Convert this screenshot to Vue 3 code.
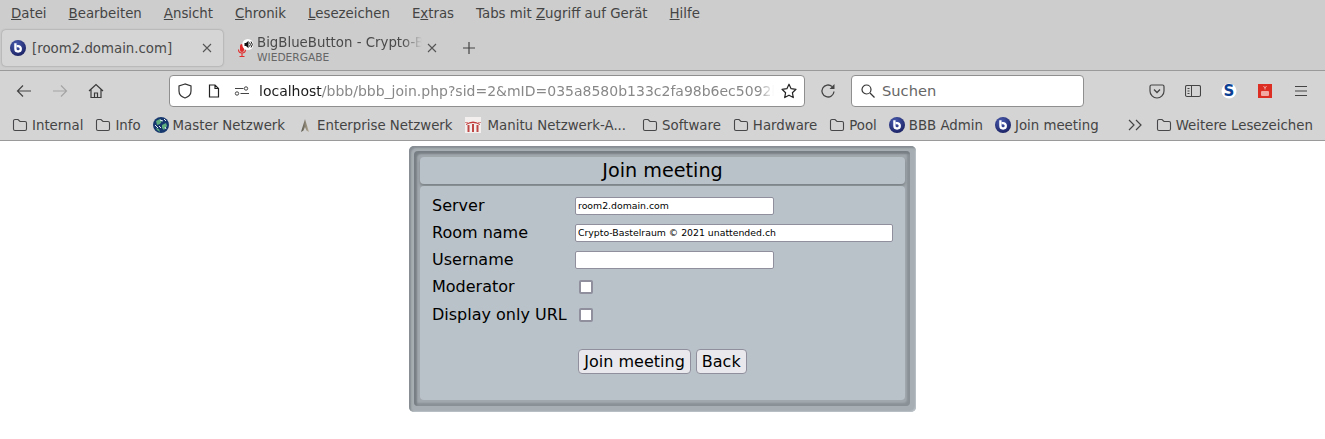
<script setup>
const menus = [
  { pre: '', u: 'D', post: 'atei' },
  { pre: '', u: 'B', post: 'earbeiten' },
  { pre: '', u: 'A', post: 'nsicht' },
  { pre: '', u: 'C', post: 'hronik' },
  { pre: '', u: 'L', post: 'esezeichen' },
  { pre: 'E', u: 'x', post: 'tras' },
  { pre: 'Tabs mit ', u: 'Z', post: 'ugriff auf Gerät' },
  { pre: '', u: 'H', post: 'ilfe' }
]
const bookmarks = [
  { t: 'Internal', i: 'folder' },
  { t: 'Info', i: 'folder' },
  { t: 'Master Netzwerk', i: 'globe' },
  { t: 'Enterprise Netzwerk', i: 'ship' },
  { t: 'Manitu Netzwerk-A...', i: 'manitu' },
  { t: 'Software', i: 'folder' },
  { t: 'Hardware', i: 'folder' },
  { t: 'Pool', i: 'folder' },
  { t: 'BBB Admin', i: 'bbb' },
  { t: 'Join meeting', i: 'bbb' }
]
</script>

<template>
  <div class="browser">
    <svg width="0" height="0" class="defs">
      <defs>
        <radialGradient id="bbbg" cx="0.4" cy="0.3" r="0.8">
          <stop offset="0" stop-color="#4a5cb0"/>
          <stop offset="1" stop-color="#161c5c"/>
        </radialGradient>
        <linearGradient id="shipg" x1="0" x2="1" y1="0" y2="0">
          <stop offset="0" stop-color="#57534a"/>
          <stop offset="1" stop-color="#b8ad98"/>
        </linearGradient>
        <symbol id="folder" viewBox="0 0 16 16">
          <path d="M1.5 4a1.5 1.5 0 0 1 1.5-1.5h3l2 2h5a1.500 1.500 0 0 1 1.500 1.500v6a1.500 1.500 0 0 1-1.500 1.500H3A1.500 1.500 0 0 1 1.500 12z" fill="none" stroke="#474749" stroke-width="1.100"/>
        </symbol>
        <symbol id="bbb" viewBox="0 0 16 16">
          <circle cx="8" cy="8" r="8" fill="url(#bbbg)"/>
          <path d="M5.400 3.200V8.800a2.700 2.700 0 1 0 2.700-2.700H6.800" fill="none" stroke="#fff" stroke-width="2.300"/>
        </symbol>
        <symbol id="globe" viewBox="0 0 16 16">
          <circle cx="8" cy="8" r="8" fill="#16386f"/>
          <path d="M3 4l4-2 2 2-2 3-3 1zM9 8l4-2 1 3-3 4-2-2zM3 11l3 1 1 3-3-2z" fill="#5fae7d"/>
          <path d="M7 3l3 1M2 8l3 3M11 2l2 2M6 9l2 2M12 10l1 2" stroke="#e8f0f6" fill="none"/>
        </symbol>
        <symbol id="ship" viewBox="0 0 16 16">
          <path d="M8 2 L12 15 L9.500 13.500 L8 10 L6.500 13.500 L4 15 Z" fill="url(#shipg)"/>
        </symbol>
        <symbol id="manitu" viewBox="0 0 16 16">
          <rect width="16" height="16" fill="#f3efef"/>
          <path d="M1 7 Q8 2 15 7 L15 8 Q8 4 1 8 Z" fill="#c23a3a"/>
          <path d="M2.500 8h2v7h-2zM7 7h2v8H7zM11.500 8h2v7h-2z" fill="#c04646"/>
          <path d="M0 5h3v1H0zM13 5h3v1h-3z" fill="#d98a8a"/>
        </symbol>
      </defs>
    </svg>

    <div class="menubar">
      <span v-for="m in menus" :key="m.u" class="menu">{{ m.pre }}<u>{{ m.u }}</u>{{ m.post }}</span>
    </div>

    <div class="tabbar">
      <div class="tab active">
        <svg class="i16"><use href="#bbb"/></svg>
        <span class="tab-title">[room2.domain.com]</span>
        <svg class="close" viewBox="0 0 10 10"><path d="M1 1l8 8M9 1l-8 8" stroke="#555" stroke-width="1.100"/></svg>
      </div>
      <div class="tab second">
        <span class="mute">
          <svg viewBox="0 0 16 18" width="16" height="18">
            <path d="M2 7a2 2 0 0 1 4 0v4a2 2 0 0 1-4 0z" fill="#e22b2b"/>
            <path d="M0.500 10.500a3.500 3.500 0 0 0 7 0M4 14.500v2.500M1.500 17.500h5" fill="none" stroke="#e22b2b" stroke-width="1.100"/>
            <circle cx="9.800" cy="5.500" r="5.500" fill="#fff"/>
            <path d="M6.500 4h1.500l2.500-2.200v7.400L8 7H6.500z" fill="#111"/>
            <path d="M11.500 3.500a3 3 0 0 1 0 4M13 2.500a4.500 4.500 0 0 1 0 6" fill="none" stroke="#111"/>
          </svg>
        </span>
        <span class="tab-stack">
          <span class="tab-fade">BigBlueButton - Crypto-Bastelraum</span>
          <span class="tab-sub">WIEDERGABE</span>
        </span>
        <svg class="close" viewBox="0 0 10 10"><path d="M1 1l8 8M9 1l-8 8" stroke="#555" stroke-width="1.100"/></svg>
      </div>
      <svg class="plus" viewBox="0 0 12 12"><path d="M6 0v12M0 6h12" stroke="#444" stroke-width="1.200"/></svg>
    </div>

    <div class="toolbar">
      <div class="nav">
        <svg class="i16" viewBox="0 0 16 16"><path d="M15 8H1.500M7 2.500L1.500 8 7 13.500" fill="none" stroke="#444" stroke-width="1.200"/></svg>
        <svg class="i16" viewBox="0 0 16 16"><path d="M1 8h13.500M9 2.500L14.500 8 9 13.500" fill="none" stroke="#a4a4a4" stroke-width="1.200"/></svg>
        <svg class="i16" viewBox="0 0 16 16"><path d="M1 8L8 1.500 15 8M3 6.500V14.500H13V6.500M6.500 14.500V10h3v4.500" fill="none" stroke="#3a3a3a" stroke-width="1.200"/></svg>
      </div>
      <div class="urlbar">
        <svg class="i16" viewBox="0 0 16 16"><path d="M8 1L2 3v5c0 3.500 3 6 6 7 3-1 6-3.500 6-7V3z" fill="none" stroke="#333" stroke-width="1.200"/></svg>
        <svg class="i14 doc" viewBox="0 0 14 14"><path d="M2.500 1h5.500l3.500 3.500V13H2.500zM8 1v3.500h3.500" fill="none" stroke="#222" stroke-width="1.200"/></svg>
        <svg class="i16 perm" viewBox="0 0 16 16"><circle cx="3" cy="10.500" r="1.700" fill="none" stroke="#444"/><circle cx="12" cy="5.500" r="1.700" fill="none" stroke="#444"/><path d="M1 5.500h8.500M6.500 10.500H15" stroke="#444" stroke-width="1.100"/></svg>
        <span class="url"><b>localhost</b>/bbb/bbb_join.php?sid=2&amp;mID=035a8580b133c2fa98b6ec5092b1a7c4</span>
        <svg class="i16 star" viewBox="0 0 16 16"><path d="M8 1.200l2.100 4.500 4.900.6-3.600 3.400.9 4.900L8 12.200l-4.300 2.400.9-4.900L1 6.300l4.900-.6z" fill="none" stroke="#222" stroke-width="1.200" stroke-linejoin="round"/></svg>
      </div>
      <svg class="i16 reload" viewBox="0 0 16 16"><path d="M14 8.500a6 6 0 1 1-2-5" fill="none" stroke="#444" stroke-width="1.300"/><path d="M14.500 1v5h-5z" fill="#444"/></svg>
      <div class="search">
        <svg class="i14" viewBox="0 0 14 14"><circle cx="5.500" cy="5.500" r="4.500" fill="none" stroke="#333" stroke-width="1.200"/><path d="M9 9l4.500 4.500" stroke="#333" stroke-width="1.300"/></svg>
        <span>Suchen</span>
      </div>
      <div class="extras">
        <svg class="i16" viewBox="0 0 16 16"><path d="M2.500 2h11A1.500 1.500 0 0 1 15 3.500V8a7 7 0 0 1-14 0V3.500A1.500 1.500 0 0 1 2.500 2z" fill="none" stroke="#444" stroke-width="1.200"/><path d="M5 6.500l3 3 3-3" fill="none" stroke="#444" stroke-width="1.300"/></svg>
        <svg class="i16" viewBox="0 0 16 16"><rect x="0.500" y="2.500" width="15" height="11" rx="1.500" fill="none" stroke="#444" stroke-width="1.100"/><path d="M6.500 3v10M2.500 5.500h2M2.500 8h2M2.500 10.500h2" stroke="#444"/></svg>
        <svg class="i16" viewBox="0 0 16 16"><circle cx="8" cy="8" r="7.500" fill="#fff"/><text x="8" y="13" text-anchor="middle" class="s-glyph">S</text></svg>
        <svg class="i16" viewBox="0 0 16 16"><rect x="1" y="1" width="14" height="14" fill="#dc2e22"/><rect x="4" y="8" width="8" height="5" rx="1" fill="#f2a9a2"/><path d="M6.500 3l1.500 2 1.500-2M8 5v1.500" stroke="#f2a9a2" fill="none"/></svg>
        <svg class="i16" viewBox="0 0 16 16"><path d="M2 3.500h12M2 8h12M2 12.500h12" stroke="#444" stroke-width="1.200"/></svg>
      </div>
    </div>

    <div class="bookmarks">
      <div v-for="b in bookmarks" :key="b.t" class="bm" :class="b.i">
        <svg class="i16"><use :href="'#' + b.i"/></svg>
        <span>{{ b.t }}</span>
      </div>
      <svg class="chev" viewBox="0 0 14 12"><path d="M1 1l5 5-5 5M8 1l5 5-5 5" fill="none" stroke="#444" stroke-width="1.200"/></svg>
      <div class="bm">
        <svg class="i16"><use href="#folder"/></svg>
        <span>Weitere Lesezeichen</span>
      </div>
    </div>

    <main class="page">
      <div class="outer">
        <div class="inner">
          <h1 class="title">Join meeting</h1>
          <form class="body" @submit.prevent>
            <div class="rows">
              <label>Server</label>
              <input class="small" value="room2.domain.com" />
              <label>Room name</label>
              <input class="long" value="Crypto-Bastelraum © 2021 unattended.ch" />
              <label>Username</label>
              <input class="small" value="" />
              <label>Moderator</label>
              <span class="check"></span>
              <label>Display only URL</label>
              <span class="check"></span>
            </div>
            <div class="buttons">
              <button>Join meeting</button>
              <button>Back</button>
            </div>
          </form>
        </div>
      </div>
    </main>
  </div>
</template>

<style>
html, body { margin: 0; background: #fff; }
</style>

<style scoped>
.browser { width: 1325px; height: 439px; overflow: hidden; font-family: "DejaVu Sans", sans-serif; color: #444; background: #fff; }
.defs { position: absolute; }
.i16 { width: 16px; height: 16px; flex: none; }
.i14 { width: 14px; height: 14px; flex: none; }

.menubar { height: 26px; background: #cdcdcd; display: flex; align-items: center; font-size: 13.33px; }
.menu { padding: 0 11px; color: #444; white-space: nowrap; }

.tabbar { height: 44px; background: #cdcdcd; border-bottom: 1px solid #9a9a9a; display: flex; align-items: center; padding-left: 2px; }
.tab { display: flex; align-items: center; height: 36px; box-sizing: border-box; font-size: 13.33px; }
.tab.active { width: 221px; background: #d5d5d5; border-radius: 4px; box-shadow: 0 0 2px rgba(0,0,0,.35); padding-left: 8px; padding-right: 11px; }
.tab-title { margin-left: 6px; flex: 1; color: #4a4a4a; }
.close { width: 10px; height: 10px; flex: none; }
.tab.second { margin-left: 14px; padding-left: 1px; }
.mute { width: 16px; height: 18px; margin-right: 3px; }
.tab-stack { display: flex; flex-direction: column; width: 165px; margin-right: 5px; padding-top: 4px; overflow: hidden; line-height: 14px; }
.tab-fade { white-space: nowrap; overflow: hidden; color: #4a4a4a; -webkit-mask-image: linear-gradient(90deg, #000 88%, transparent); mask-image: linear-gradient(90deg, #000 88%, transparent); }
.tab-sub { font-size: 10.67px; color: #666; line-height: 14px; margin-top: 1px; }
.plus { width: 12px; height: 12px; margin-left: 26px; }

.toolbar { height: 39px; background: #d4d4d4; display: flex; align-items: center; }
.nav { display: flex; gap: 20px; width: 169px; padding-left: 16px; box-sizing: border-box; }
.urlbar { width: 636px; height: 32px; box-sizing: border-box; background: #fff; border: 1px solid #8f8f8f; border-radius: 4px; display: flex; align-items: center; padding-left: 7px; flex: none; }
.doc { margin-left: 14px; }
.perm { margin-left: 13px; }
.url { margin-left: 9px; font-size: 14px; color: #888; white-space: nowrap; width: 515px; overflow: hidden; -webkit-mask-image: linear-gradient(90deg, #000 97%, transparent); mask-image: linear-gradient(90deg, #000 97%, transparent); }
.url b { font-weight: 400; color: #1c1c1c; }
.star { margin-left: 7px; }
.reload { margin-left: 15px; }
.search { width: 233px; height: 32px; box-sizing: border-box; margin-left: 15px; background: #fff; border: 1px solid #8f8f8f; border-radius: 4px; display: flex; align-items: center; padding-left: 9px; gap: 7px; font-size: 14.67px; color: #666; flex: none; }
.extras { display: flex; gap: 20px; margin-left: 65px; }
.s-glyph { font: 700 15px "DejaVu Sans", sans-serif; fill: #0b3f94; }

.bookmarks { height: 30px; background: #d4d4d4; border-bottom: 1px solid #9a9a9a; display: flex; align-items: center; padding-left: 12px; gap: 12px; font-size: 13.33px; color: #444; }
.bm { display: flex; align-items: center; gap: 4px; white-space: nowrap; }
.bm.manitu { gap: 7px; margin-right: 4px; }
.chev { width: 14px; height: 12px; margin-left: 17px; margin-right: 2px; }

.page { display: flex; justify-content: center; padding-top: 5px; }
.outer { width: 507px; height: 266px; box-sizing: border-box; background: #a8afb4; border-radius: 5px; padding: 5px 6px 6px 5px; box-shadow: inset 2px 2px 2px #858c91, inset -1px -1px 1px #bac1c6; }
.inner { height: 100%; box-sizing: border-box; background: #a2a9ae; border-radius: 4px; padding: 6px 5px 6px 6px; display: flex; flex-direction: column; gap: 2px; box-shadow: inset 3px 3px 2px #787f84, inset -3px -3px 2px #8a9196; }
.title { margin: 0; height: 27px; line-height: 27px; font-size: 19.2px; font-weight: 400; text-align: center; color: #000; background: #bac2c9; border-radius: 4px; box-shadow: 0 2px 3px #7a8186; }
.body { flex: 1; background: #bac2c9; border-radius: 4px; padding: 6px 12px; display: flex; flex-direction: column; }
.rows { display: grid; grid-template-columns: 143px 1fr; grid-template-rows: 27px 27px 27px 27px 29px; align-items: center; color: #000; font-size: 16px; }
.rows label { white-space: nowrap; }
.rows input { box-sizing: border-box; height: 18px; border: 1px solid #8f8f9d; border-radius: 2px; background: #fff; padding: 0 2px; font: 9.33px "DejaVu Sans", sans-serif; color: #000; }
.small { width: 199px; }
.long { width: 318px; }
.check { width: 14px; height: 14px; box-sizing: border-box; margin: 1px 0 0 4px; background: #fff; border: 2px solid #8f8f9d; border-radius: 2px; }
.buttons { display: flex; justify-content: center; gap: 5px; margin-top: 20px; }
button { height: 25px; box-sizing: border-box; padding: 0 5px; background: #e9e9ed; border: 1px solid #8f8f9d; border-radius: 4px; font: 16px "DejaVu Sans", sans-serif; color: #000; }
</style>
